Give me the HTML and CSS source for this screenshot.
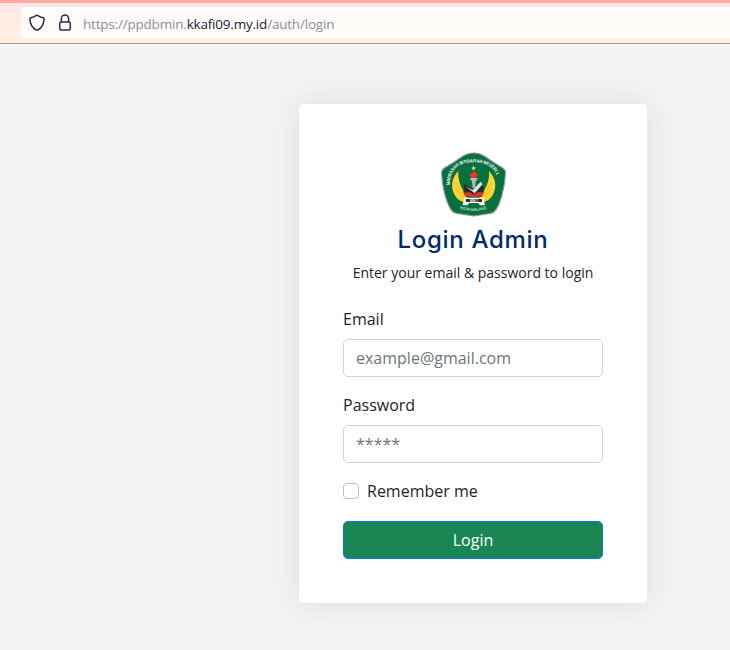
FILE: index.html
```html
<!DOCTYPE html>
<html lang="en">
<head>
<meta charset="utf-8">
<title>Login Admin</title>
<link rel="stylesheet" href="styles.css">
</head>
<body>
<header class="browser">
  <div class="tabline"></div>
  <div class="address">
    <svg class="shield" viewBox="0 0 16 18"><path d="M8 1.2 Q4.8 3.3 1.7 3.8 Q.8 4 .9 5 Q1.3 12.8 7 15.8 Q8 16.3 9 15.8 Q14.7 12.8 15.1 5 Q15.2 4 14.3 3.8 Q11.2 3.3 8 1.2Z"/></svg>
    <svg class="lock" viewBox="0 0 14 18"><rect x="1.7" y="8" width="10.6" height="8.1" rx="1.5"/><path d="M3.4 8V4.5a3.6 3.6 0 0 1 7.2 0V8"/></svg>
    <span class="url">https://ppdbmin.<b>kkafi09.my.id</b>/auth/login</span>
  </div>
</header>
<main>
  <section class="card">
    <svg class="logo" viewBox="24 21 195 195">
      <path d="M122 24Q141 24 158 36Q184 55 209 69Q219 75 217 88Q216 116 208 146Q201 175 189 194Q183 203 173 205Q148 208 122 213Q96 208 71 205Q60 203 54 194Q42 175 35 146Q27 116 26 88Q25 75 34 69Q60 55 86 36Q103 24 122 24Z" fill="#08713f" stroke="#8f9590" stroke-width="3.5"/>
      <path id="arc" d="M50 121Q50 52 122 52Q194 52 196 121" fill="none"/>
      <path id="base" d="M80 191Q122 206 166 190" fill="none"/>
      <text class="crest"><textPath href="#arc" textLength="198" lengthAdjust="spacingAndGlyphs">MADRASAH IBTIDAIYAH NEGERI 1</textPath></text>
      <text class="crest city"><textPath href="#base" textLength="84">KOTA MALANG</textPath></text>
      <path d="M76 78Q47 109 63 146Q74 171 101 172L107 160Q91 153 91 137Q73 108 76 78ZM168 78Q197 109 181 146Q170 171 143 172L137 160Q153 153 153 137Q171 108 168 78Z" fill="#fbd334"/>
      <path d="M70 113L94 152M174 113L150 152M68 132L98 164M176 132L146 164" stroke="#e8b526" stroke-width="2"/>
      <path d="M122 62L124 67L129 68L125 71L126 76L122 73L118 76L119 71L115 68L120 67Z" fill="#ffe62e"/>
      <path d="M122 78Q127 85 134 86Q133 98 122 101Q111 97 111 86Q120 87 122 78Z" fill="#ef3428"/>
      <path d="M111 99H134L131 107H114ZM117 107H128L126 129H119Z" fill="#b6bbb5"/>
      <path d="M94 118L122 132L149 116L153 137L138 152H106L92 138Z" fill="#242c2a"/>
      <path d="M97 124L119 135L143 110L149 118L125 145Z" fill="#dce2dc"/>
      <path d="M95 143Q110 137 122 149Q134 137 151 143L147 156Q133 151 122 159Q111 151 98 156Z" fill="#df3029"/>
      <path d="M94 158H151L156 181H141L136 174H109L103 181H89Z" fill="#f5f6ed"/>
      <path d="M99 162H147V171H99Z" fill="#20352a"/>
      <text x="123" y="170" text-anchor="middle" class="crest min">MIN 1</text>
    </svg>
    <h1>Login Admin</h1>
    <p>Enter your email &amp; password to login</p>
    <form>
      <label for="email">Email</label>
      <input class="field" id="email" type="email" placeholder="example@gmail.com">
      <label for="password">Password</label>
      <input class="field" id="password" type="password" placeholder="*****">
      <label class="remember"><input type="checkbox"><span>Remember me</span></label>
      <button type="button">Login</button>
    </form>
  </section>
</main>
</body>
</html>
```
FILE: styles.css
```css
* { box-sizing: border-box; }
body {
  margin: 0;
  height: 650px;
  overflow: hidden;
  background: #f3f3f3;
  color: #212529;
  font: 16px/24px "Open Sans", sans-serif;
}
.browser {
  height: 44px;
  padding-top: 3px;
  border-bottom: 1px solid #bd8f78;
  background: linear-gradient(#ffe6e4, #fff1e3);
}
.tabline {
  height: 3px;
  margin-top: -3px;
  background: #ffaaa2;
}
.address {
  height: 32px;
  margin: 4px 0 0 21px;
  padding-left: 8px;
  display: flex;
  align-items: center;
  border-radius: 4px 0 0 4px;
  background: #fffcf9;
}
.shield, .lock {
  fill: none;
  stroke: #312449;
  stroke-width: 1.5;
  stroke-linejoin: round;
}
.shield { width: 16px; height: 18px; }
.lock { width: 14px; height: 18px; margin-left: 13px; }
.url {
  margin-left: 11px;
  padding-top: 2px;
  color: #928a9f;
  font: 13.5px/20px "Open Sans", sans-serif;
  letter-spacing: -.2px;
  white-space: nowrap;
}
.url b { color: #24183d; font-weight: 400; }
.card {
  width: 348px;
  height: 499px;
  margin: 60px 0 0 299px;
  padding: 48px 44px 44px;
  border-radius: 5px;
  background: #fff;
  box-shadow: 0 0 30px rgba(1, 41, 112, .1);
}
.logo {
  display: block;
  width: 65px;
  height: 65px;
  margin: 0 auto;
}
.crest { font: bold 14px "Liberation Sans", sans-serif; fill: #fff; }
.city { font-size: 12px; font-weight: 400; }
.min { font-size: 9px; }
h1 {
  margin: 8px 0 0;
  text-align: center;
  color: #012970;
  font: 500 24px/30px Inter, sans-serif;
  letter-spacing: .7px;
}
p {
  margin: 7px 0 0;
  text-align: center;
  font-size: 14px;
  line-height: 21px;
}
form { margin-top: 24px; }
label { display: block; }
.field {
  display: block;
  width: 100%;
  height: 38px;
  margin: 8px 0 16px;
  padding: 6px 12px;
  border: 1px solid #ced4da;
  border-radius: 5px;
  background: #fff;
  font: inherit;
}
.field::placeholder { color: #6c757d; opacity: 1; }
.remember { display: flex; align-items: center; }
.remember input {
  appearance: none;
  width: 16px;
  height: 16px;
  margin: 0 8px 0 0;
  border: 1px solid #bfbfbf;
  border-radius: 4px;
}
button {
  display: block;
  width: 100%;
  height: 38px;
  margin-top: 18px;
  padding: 0;
  border: 1px solid #0d6efd;
  border-radius: 5px;
  background: #198754;
  color: #fff;
  font: inherit;
}
```
